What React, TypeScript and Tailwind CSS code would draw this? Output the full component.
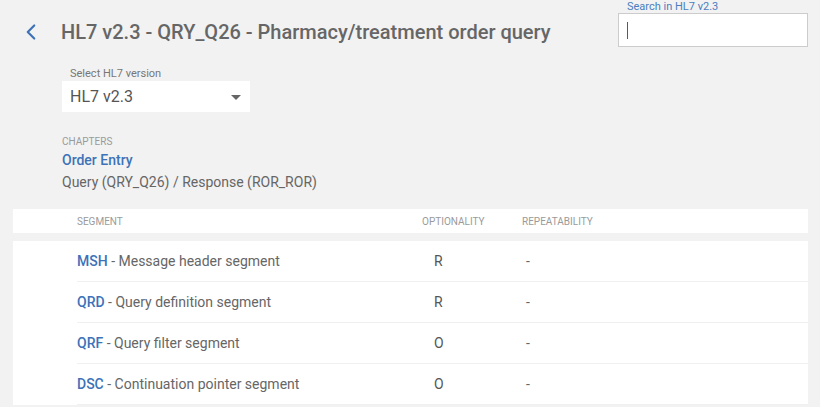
import { ChevronLeft } from 'lucide-react';

const segments = [
  { code: 'MSH', name: 'Message header segment', opt: 'R', rep: '-' },
  { code: 'QRD', name: 'Query definition segment', opt: 'R', rep: '-' },
  { code: 'QRF', name: 'Query filter segment', opt: 'O', rep: '-' },
  { code: 'DSC', name: 'Continuation pointer segment', opt: 'O', rep: '-' },
];

export default function App() {
  return (
    <div className="min-h-[407px] w-[820px] bg-[#f2f2f2] font-['Roboto',sans-serif] text-[#666]">
      <div className="flex items-start">
        <div className="flex items-center pt-[19px]">
          <ChevronLeft className="ml-[18px] text-[#3d72b8]" size={26} strokeWidth={2} />
          <h1 className="ml-[17px] text-[20px] leading-[24px] font-medium text-[#666]">
            HL7 v2.3 - QRY_Q26 - Pharmacy/treatment order query
          </h1>
        </div>
        <div className="ml-auto mr-[12px] w-[190px]">
          <div className="pl-[9px] pt-[1px] text-[11px] leading-[12px] text-[#4a7ec0]">Search in HL7 v2.3</div>
          <div className="flex h-[34px] items-center border border-[#cccccc] bg-white pl-[8px]">
            <span className="h-[17px] w-px bg-[#3d5f8f]" />
          </div>
        </div>
      </div>

      <div className="ml-[62px] mt-[20px]">
        <div className="pl-[8px] text-[11px] leading-[13px] text-[#777]">Select HL7 version</div>
        <div className="mt-[1px] flex h-[31px] w-[188px] items-center justify-between bg-white pl-[8px] pr-[5px]">
          <span className="text-[16px] text-[#555]">HL7 v2.3</span>
          <svg width="10" height="5" viewBox="0 0 10 5" className="mr-[4px] mt-[1px]">
            <path d="M0 0 L10 0 L5 5 Z" fill="#666" />
          </svg>
        </div>
      </div>

      <div className="ml-[62px] mt-[24px]">
        <div className="text-[10px] leading-[12px] text-[#9a9a9a]">CHAPTERS</div>
        <div className="mt-[3px] text-[14px] leading-[18px] font-medium text-[#3d72b8]">Order Entry</div>
        <div className="mt-[4px] text-[14px] leading-[18px] text-[#666]">Query (QRY_Q26) / Response (ROR_ROR)</div>
      </div>

      <div className="mr-[12px] ml-[13px] mt-[18px] flex h-[24px] items-center bg-white text-[10px] text-[#9a9a9a]">
        <div className="ml-[64px] w-[345px]">SEGMENT</div>
        <div className="w-[100px]">OPTIONALITY</div>
        <div>REPEATABILITY</div>
      </div>

      <div className="mr-[12px] ml-[13px] mt-[8px] bg-white">
        {segments.map(s => (
          <div key={s.code} className="ml-[64px] flex h-[41px] items-center border-b border-[#f0f0f0] text-[14px]">
            <div className="w-[345px]">
              <span className="font-medium text-[#3d72b8]">{s.code}</span>
              <span className="text-[#666]"> - {s.name}</span>
            </div>
            <div className="w-[100px] pl-[12px] text-[#555]">{s.opt}</div>
            <div className="pl-[4px] text-[#666]">{s.rep}</div>
          </div>
        ))}
      </div>
    </div>
  );
}
